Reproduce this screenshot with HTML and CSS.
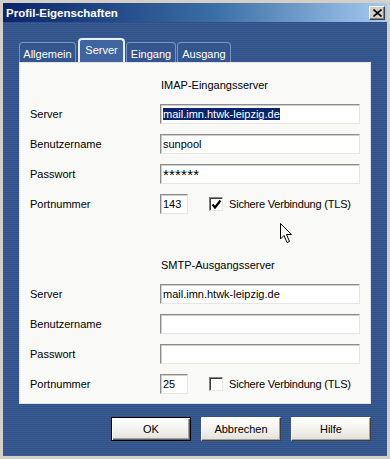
FILE: index.html
```html
<!DOCTYPE html>
<html lang="de">
<head>
<meta charset="utf-8">
<title>Profil-Eigenschaften</title>
<link rel="stylesheet" href="styles.css">
</head>
<body>
<div class="window">
  <div class="titlebar">
    <span class="title">Profil-Eigenschaften</span>
    <span class="close">
      <svg width="9" height="8" viewBox="0 0 9 8"><path d="M0.5 0.5 L8.5 7.5 M8.5 0.5 L0.5 7.5" stroke="#000" stroke-width="1.6"/></svg>
    </span>
  </div>
  <div class="client">
    <div class="tabs">
      <div class="tab t-allg">Allgemein</div>
      <div class="tab active t-serv">Server</div>
      <div class="tab t-eing">Eingang</div>
      <div class="tab t-ausg">Ausgang</div>
    </div>
    <div class="panel">
      <div class="section">
        <div class="head">IMAP-Eingangsserver</div>
        <div class="row"><span class="label">Server</span><div class="field"><span class="sel">mail.imn.htwk-leipzig.de</span></div></div>
        <div class="row"><span class="label">Benutzername</span><div class="field">sunpool</div></div>
        <div class="row"><span class="label">Passwort</span><div class="field pw">******</div></div>
        <div class="row"><span class="label">Portnummer</span><div class="field port">143</div>
          <span class="check"><svg width="11" height="11" viewBox="0 0 11 11"><path d="M1.5 5.5 L4 8.5 L9.5 1.5" fill="none" stroke="#000" stroke-width="2.2"/></svg></span>
          <span class="ctext">Sichere Verbindung (TLS)</span></div>
      </div>
      <div class="section second">
        <div class="head">SMTP-Ausgangsserver</div>
        <div class="row"><span class="label">Server</span><div class="field">mail.imn.htwk-leipzig.de</div></div>
        <div class="row"><span class="label">Benutzername</span><div class="field"></div></div>
        <div class="row"><span class="label">Passwort</span><div class="field"></div></div>
        <div class="row"><span class="label">Portnummer</span><div class="field port">25</div>
          <span class="check"></span>
          <span class="ctext">Sichere Verbindung (TLS)</span></div>
      </div>
      <svg class="cursor" width="14" height="21" viewBox="0 0 14 21"><path d="M0.5 0.5 L0.5 16 L4 12.5 L7 19.5 L9.5 18.5 L6.5 11.5 L11.5 11.5 Z" fill="#fff" stroke="#000" stroke-width="1"/></svg>
    </div>
    <div class="buttons">
      <div class="btn default">OK</div>
      <div class="btn">Abbrechen</div>
      <div class="btn">Hilfe</div>
    </div>
  </div>
</div>
</body>
</html>
```
FILE: styles.css
```css
html, body {
  margin: 0;
  padding: 0;
  background: #d4d0c8;
}
body {
  font-family: "Liberation Sans", Arial, sans-serif;
  font-size: 11px;
  color: #000;
}
.window {
  width: 390px;
  height: 459px;
  box-sizing: border-box;
  border: 3px solid #d4d0c8;
  box-shadow: inset -1px -1px 0 #404040, inset 1px 1px 0 #ffffff;
  display: flex;
  flex-direction: column;
  background: #d4d0c8;
}
.titlebar {
  height: 19px;
  flex: none;
  display: flex;
  align-items: center;
  justify-content: space-between;
  padding: 0 2px 0 3px;
  background: linear-gradient(to right, #0a246a 0%, #3a6ea5 55%, #a6caf0 100%);
}
.title {
  color: #fff;
  font-weight: bold;
  font-size: 11.5px;
}
.close {
  width: 16px;
  height: 14px;
  box-sizing: border-box;
  background: #d4d0c8;
  border: 1px solid;
  border-color: #ffffff #404040 #404040 #ffffff;
  box-shadow: inset -1px -1px 0 #808080;
  display: flex;
  align-items: center;
  justify-content: center;
}
.client {
  flex: 1;
  padding: 16px 16px 15px 16px;
  display: flex;
  flex-direction: column;
  background: repeating-linear-gradient(to bottom, #30508a 0px, #30508a 1px, #3b5b93 1px, #3b5b93 2px);
}
.tabs {
  height: 24px;
  display: flex;
  align-items: flex-end;
  gap: 1px;
}
.tab {
  height: 20px;
  box-sizing: border-box;
  border: 1px solid #7894c4;
  border-bottom: none;
  border-radius: 4px 4px 0 0;
  background: #34558e;
  color: #fff;
  display: flex;
  align-items: center;
  justify-content: center;
  padding-top: 2px;
}
.t-allg { width: 57px; margin-right: 1px; }
.t-serv { width: 47px; }
.t-eing { width: 50px; }
.t-ausg { width: 54px; }
.tab.active {
  height: 24px;
  border: 2px solid #e8eef8;
  border-bottom: none;
  background: #3f64a0;
  padding-top: 0;
  padding-bottom: 3px;
}
.panel {
  position: relative;
  height: 342px;
  box-sizing: border-box;
  background: #f9f9f7;
  border: 1px solid #dfe3ea;
  padding-top: 12px;
}
.section {
  display: flex;
  flex-direction: column;
  gap: 10px;
}
.section.second {
  margin-top: 41px;
}
.head {
  height: 20px;
  line-height: 20px;
  padding-left: 141px;
  margin-bottom: -1px;
}
.row {
  height: 20px;
  display: flex;
  align-items: center;
  padding-left: 10px;
}
.label {
  width: 130px;
  flex: none;
}
.field {
  width: 200px;
  height: 20px;
  box-sizing: border-box;
  background: #fff;
  border: 1px solid;
  border-color: #8c8c8c #e6e6e6 #e6e6e6 #8c8c8c;
  box-shadow: inset 1px 1px 0 #cfcfcf;
  padding-left: 2px;
  line-height: 18px;
  white-space: nowrap;
  overflow: hidden;
}
.field.pw {
  font-size: 15px;
  line-height: 20px;
  letter-spacing: 0.2px;
}
.field.port {
  width: 28px;
}
.sel {
  background: #0a246a;
  color: #fff;
}
.check {
  width: 14px;
  height: 14px;
  box-sizing: border-box;
  margin-left: 21px;
  background: #fff;
  border: 1px solid;
  border-color: #808080 #e8e8e8 #e8e8e8 #808080;
  box-shadow: inset 1px 1px 0 #404040;
  display: flex;
  align-items: center;
  justify-content: center;
}
.ctext {
  margin-left: 6px;
  letter-spacing: -0.2px;
}
.cursor {
  position: absolute;
  left: 260px;
  top: 160px;
}
.buttons {
  margin-top: 13px;
  display: flex;
  justify-content: flex-end;
  gap: 10px;
}
.btn {
  width: 80px;
  height: 24px;
  box-sizing: border-box;
  background: linear-gradient(to bottom, #ffffff 0%, #f0efeb 60%, #e2e0da 100%);
  border: 1px solid;
  border-color: #ffffff #404040 #404040 #ffffff;
  box-shadow: inset -1px -1px 0 #a0a0a0;
  display: flex;
  align-items: center;
  justify-content: center;
}
.btn.default {
  border: 1px solid #000;
  box-shadow: inset 1px 1px 0 #ffffff, inset -1px -1px 0 #606060, inset -2px -2px 0 #a0a0a0;
}
```
